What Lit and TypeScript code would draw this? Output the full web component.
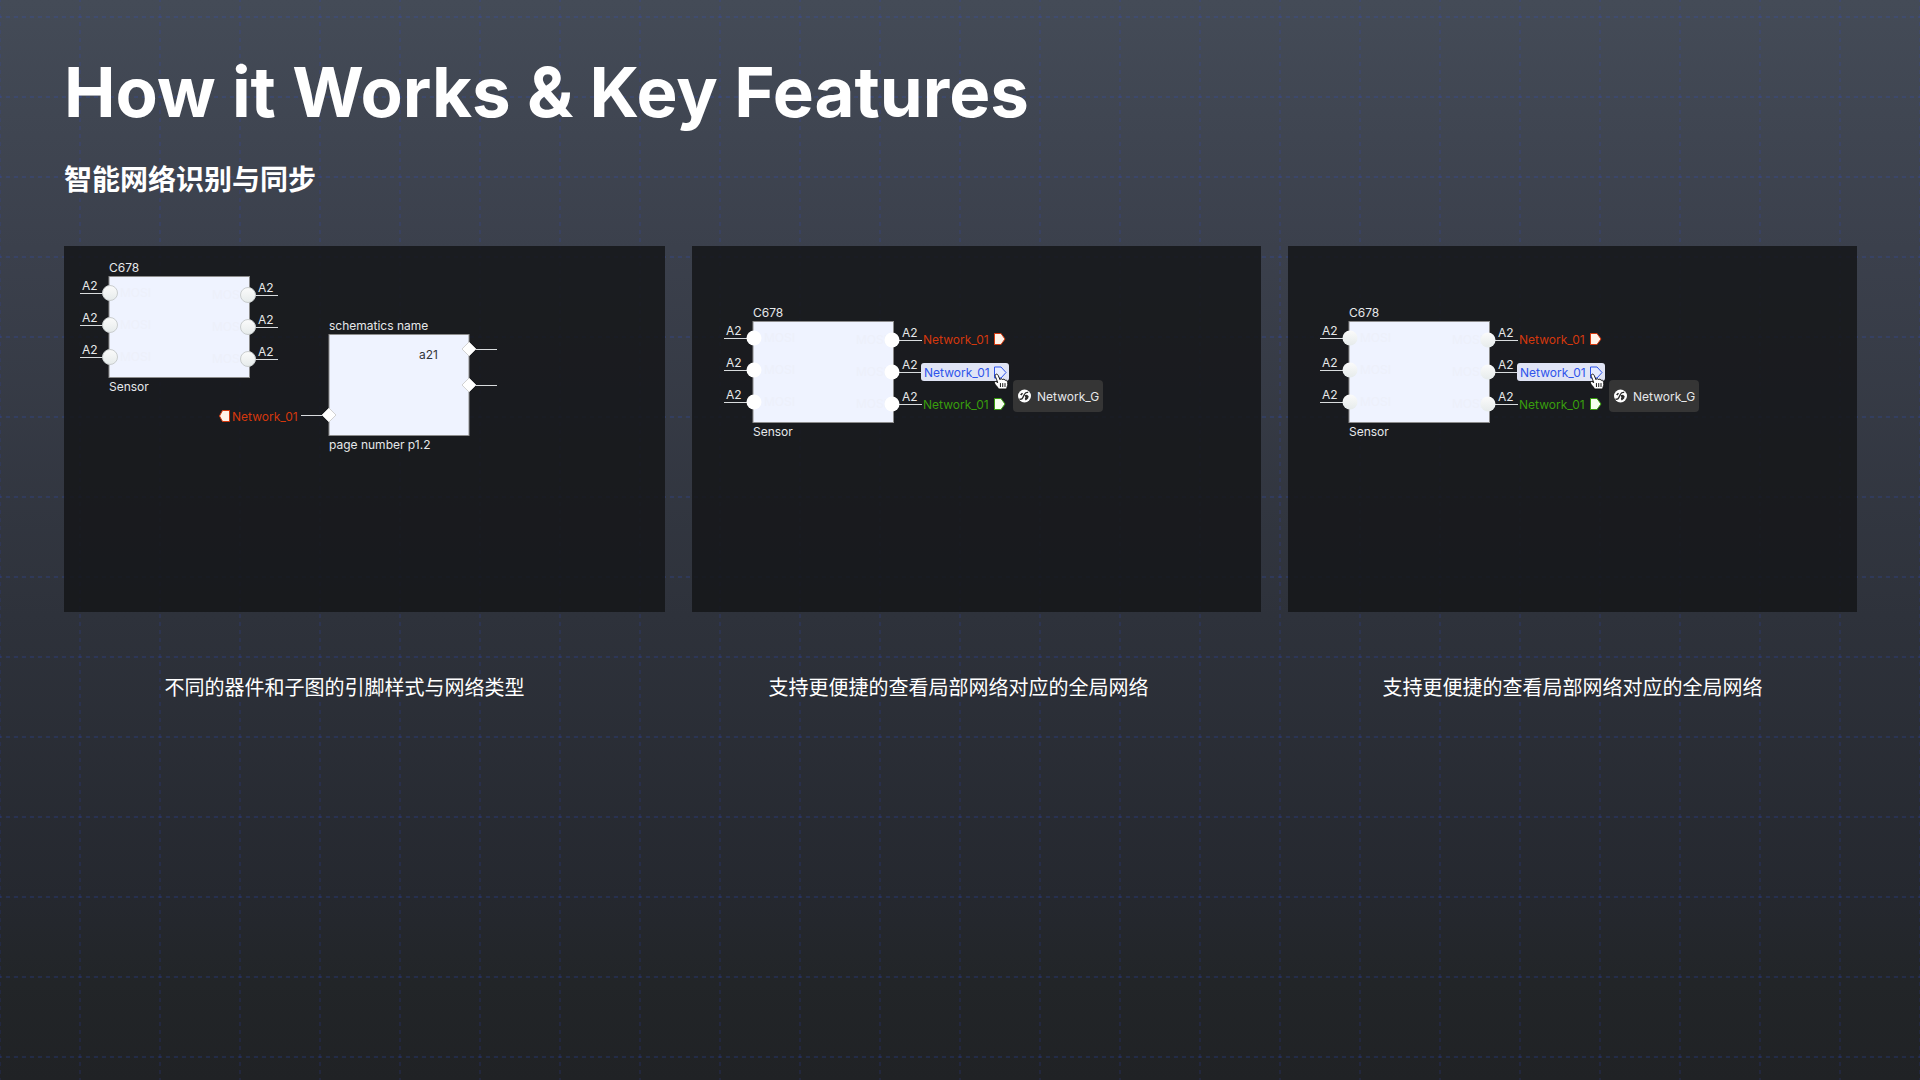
import { LitElement, html, svg, css } from "lit";
import { customElement, property } from "lit/decorators.js";

type Finish = "outlined" | "flat" | "shaded";

const PIN_ROWS = [0, 32, 64];

/** Dashed drafting grid that covers the whole slide. */
@customElement("drafting-grid")
class DraftingGrid extends LitElement {
  static styles = css`
    :host {
      display: block;
      position: absolute;
      inset: 0;
      z-index: -1;
    }
    .grid {
      display: block;
      width: 100%;
      height: 100%;
    }
    .across {
      fill: none;
      stroke: #2a54e0;
      stroke-opacity: 0.18;
      stroke-width: 2;
      stroke-dasharray: 4 4;
    }
    .down {
      fill: none;
      stroke: #2f48e0;
      stroke-opacity: 0.13;
      stroke-width: 2;
      stroke-dasharray: 4 4;
    }
  `;

  render() {
    return html`
      <svg class="grid" aria-hidden="true">
        <defs>
          <pattern id="cell" y="16" width="80" height="80" patternUnits="userSpaceOnUse">
            <path class="across" d="M-2 1H80" />
            <path class="down" d="M0 -2V80M80 -2V80" />
          </pattern>
        </defs>
        <rect width="100%" height="100%" fill="url(#cell)" />
      </svg>
    `;
  }
}

/** One schematic canvas: a component, and either a sub-sheet or its networks. */
@customElement("schematic-view")
class SchematicView extends LitElement {
  @property() finish: Finish = "outlined";
  @property() scene: "sheet" | "networks" = "networks";
  @property() label = "";

  static styles = css`
    :host {
      display: block;
      background: rgba(20, 21, 24, 0.84);
    }
    .canvas {
      display: block;
      width: 100%;
      height: 366px;
    }
    text {
      font: 12px/16px Inter, "Noto Sans", sans-serif;
      fill: #e6e8ea;
    }
    .body {
      fill: #eff3ff;
      stroke: #8c8c8c;
    }
    .wire {
      stroke: #d9dcde;
      stroke-width: 1;
    }
    .ghost {
      fill: #edf0fa;
    }
    .outlined {
      stroke: #c9cdce;
    }
    .diamond {
      fill: #fff;
      stroke: #d2d2d2;
    }
    .sheet-label {
      fill: #33363b;
    }
    .local {
      fill: #d4380d;
    }
    .selected {
      fill: #2f54eb;
    }
    .global {
      fill: #389e0d;
    }
    .tag-local {
      fill: #fff2e8;
      stroke: #d4380d;
    }
    .tag-selected {
      fill: #e6ecff;
      stroke: #2f54eb;
    }
    .tag-global {
      fill: #f6ffed;
      stroke: #389e0d;
    }
    .highlight {
      fill: #e0e4f5;
    }
    .tooltip {
      fill: #353535;
    }
    .hand {
      fill: #fff;
      stroke: #111;
      stroke-width: 0.8;
      stroke-linejoin: round;
    }
    .hand-line {
      fill: none;
      stroke: #111;
      stroke-width: 0.8;
      stroke-linecap: round;
    }
  `;

  private component() {
    const fill = this.finish === "flat" ? "#fff" : "url(#pin)";
    return svg`
      <text x="45" y="26">C678</text>
      <rect class="body" x="45" y="30.5" width="140.5" height="101" />
      <text x="45" y="145">Sensor</text>
      ${PIN_ROWS.map(
        (dy) => svg`
          <g transform="translate(0 ${dy})">
            <text class="ghost" x="56" y="51">MOSI</text>
            <text class="ghost" x="148" y="53">MOSI</text>
            <path class="wire" d="M16 47.5H39M191 49.5H214" />
            <circle class=${this.finish} cx="46" cy="47" r="7.5" fill=${fill} />
            <circle class=${this.finish} cx="184" cy="49" r="7.5" fill=${fill} />
            <text x="18" y="44">A2</text>
            <text x="194" y="46">A2</text>
          </g>`
      )}
    `;
  }

  private sheet() {
    return svg`
      <text x="265" y="84">schematics name</text>
      <rect class="body" x="265" y="88.5" width="140" height="101" />
      <text x="265" y="203">page number p1.2</text>
      <text class="sheet-label" x="355" y="113">a21</text>
      <path class="wire" d="M412 103.5H433M412 139.5H433M237 169.5H258" />
      <path class="diamond" d="M405 96l7 7-7 7-7-7zM405 132l7 7-7 7-7-7zM265 162l7 7-7 7-7-7z" />
      <path class="tag-local" d="M165.5 164.5v11h-7l-3-5.5 3-5.5z" />
      <text class="local" x="168" y="175">Network_01</text>
    `;
  }

  private networks() {
    return svg`
      <text class="local" x="231" y="98">Network_01</text>
      <path class="tag-local" d="M302.5 87.5h6.5l4 5.5-4 5.5h-6.5z" />
      <rect class="highlight" x="229" y="117" width="88" height="18" rx="3" />
      <text class="selected" x="232" y="131">Network_01</text>
      <path class="tag-selected" d="M302.5 121h6.5l5 5.5-5 5.5h-6.5z" />
      <text class="global" x="231" y="163">Network_01</text>
      <path class="tag-global" d="M302.5 152.5h6.5l4 5.5-4 5.5h-6.5z" />
      <rect class="tooltip" x="321" y="134" width="90" height="32" rx="4" />
      <circle cx="332.5" cy="150" r="6.5" fill="#fff" />
      <path d="M327.5 152.8c1.2.9 2.5.4 3.3-1.2l1.7-3.4c.7-1.3 2-2 3.7-1.8"
        fill="none" stroke="#2b2b2b" stroke-width="1.3" />
      <path d="M332.4 149.2l2.6-.5 1.7 1.6-.6 2.3-2.3 1.8-1-1.5.6-1.6zM328 148.5l2-1.8 1 .9-1.4 2z"
        fill="#2b2b2b" />
      <text x="345" y="155">Network_G</text>
      <g transform="translate(298 125.5) scale(1.2)">
        <path class="hand" d="M7 14.6C6.8 13.6 6 12.7 5.2 11.9C4.5 11.1 3.9 10.3 3.7 9.6C3.5 8.8 4.2 8.2 5 8.4C5.5 8.5 6 8.9 6.4 9.3C6 7.9 5.2 5.8 4.5 4.3C4.1 3.3 4.3 2.6 5 2.3C5.7 2 6.4 2.4 6.8 3.2L8.3 6.8C8.4 6.2 8.9 5.9 9.4 6C10 6.1 10.3 6.5 10.5 7C10.7 6.5 11.1 6.3 11.6 6.4C12.2 6.5 12.5 6.9 12.7 7.5C13.1 7.1 13.7 7.2 14.1 7.6C14.7 8.3 14.9 9.6 14.8 10.8C14.7 12 14.1 12.7 13.9 14.6Z" />
        <path class="hand-line" d="M8.7 10v2.6M10.6 10v2.6M12.5 10v2.6" />
      </g>
    `;
  }

  render() {
    const inSheet = this.scene === "sheet";
    return html`
      <svg class="canvas" role="img" aria-label=${this.label}>
        <defs>
          <linearGradient id="pin" x2="0" y2="1">
            <stop stop-color="#fbfbfb" />
            <stop offset="1" stop-color="#e6ebeb" />
          </linearGradient>
        </defs>
        <g transform=${inSheet ? "translate(0 0)" : "translate(16 45)"}>${this.component()}</g>
        ${inSheet ? this.sheet() : this.networks()}
      </svg>
    `;
  }
}

@customElement("app-root")
class AppRoot extends LitElement {
  static styles = css`
    :host {
      display: block;
      position: relative;
      z-index: 0;
      box-sizing: border-box;
      min-height: 100vh;
      padding: 48px 63px 48px 64px;
      color: #fff;
      font-family: Inter, "Noto Sans CJK SC", sans-serif;
      background: linear-gradient(
        #444b57 0%,
        #3b404c 23%,
        #2e323b 57%,
        #25282f 83%,
        #222528 91%,
        #202225 100%
      );
    }
    .title {
      margin: 0;
      font-size: 69px;
      line-height: 88px;
      font-weight: 700;
    }
    .subtitle {
      margin: 24px 0 0;
      font-size: 28px;
      line-height: 40px;
      font-weight: 600;
    }
    .features {
      display: grid;
      grid-template-columns: 601fr 569fr 569fr;
      gap: 27px;
      margin-top: 46px;
    }
    .feature {
      margin: 0;
      min-width: 0;
    }
    .caption {
      margin-top: 61px;
      font-size: 20px;
      line-height: 30px;
      text-align: center;
    }
    .inset {
      padding-right: 36px;
    }
    .inset-wide {
      padding-right: 40px;
    }
  `;

  render() {
    const views = [
      { scene: "sheet", finish: "outlined", align: "inset-wide", caption: "不同的器件和子图的引脚样式与网络类型" },
      { scene: "networks", finish: "flat", align: "inset", caption: "支持更便捷的查看局部网络对应的全局网络" },
      { scene: "networks", finish: "shaded", align: "", caption: "支持更便捷的查看局部网络对应的全局网络" },
    ];
    return html`
      <drafting-grid></drafting-grid>
      <h1 class="title">How it Works &amp; Key Features</h1>
      <h2 class="subtitle">智能网络识别与同步</h2>
      <div class="features">
        ${views.map(
          (v) => html`
            <figure class="feature">
              <schematic-view scene=${v.scene} finish=${v.finish} label=${v.caption}></schematic-view>
              <figcaption class="caption ${v.align}">${v.caption}</figcaption>
            </figure>
          `
        )}
      </div>
    `;
  }
}
